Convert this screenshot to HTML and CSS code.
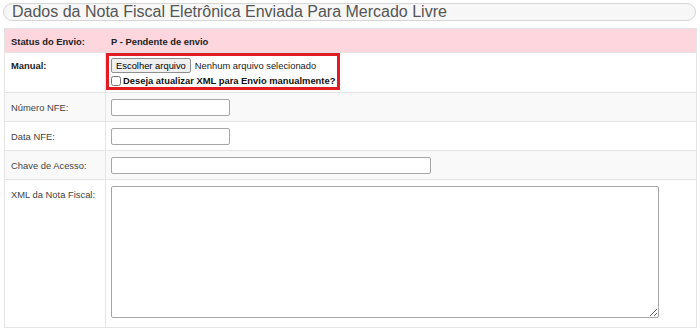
FILE: index.html
```html
<!DOCTYPE html>
<html lang="pt-BR">
<head>
<meta charset="utf-8">
<title>Dados da Nota Fiscal</title>
<link rel="stylesheet" href="styles.css">
</head>
<body>
<div class="page">
  <h1 class="box-title">Dados da Nota Fiscal Eletrônica Enviada Para Mercado Livre</h1>
  <table class="nf-table">
    <tr class="row-danger">
      <th class="lbl">Status do Envio:</th>
      <td class="val bold">P - Pendente de envio</td>
    </tr>
    <tr class="row-manual">
      <th class="lbl">Manual:</th>
      <td class="val val-manual">
        <div class="hl">
          <div class="file-line"><button class="file-btn" type="button">Escolher arquivo</button><span class="file-txt">Nenhum arquivo selecionado</span></div>
          <label class="chk-line"><input class="chk" type="checkbox"><span>Deseja atualizar XML para Envio manualmente?</span></label>
        </div>
      </td>
    </tr>
    <tr class="row-odd">
      <td class="lbl">Número NFE:</td>
      <td class="val"><input class="inp inp-sm" type="text"></td>
    </tr>
    <tr>
      <td class="lbl">Data NFE:</td>
      <td class="val"><input class="inp inp-sm" type="text"></td>
    </tr>
    <tr class="row-odd">
      <td class="lbl">Chave de Acesso:</td>
      <td class="val"><input class="inp inp-md" type="text"></td>
    </tr>
    <tr>
      <td class="lbl">XML da Nota Fiscal:</td>
      <td class="val"><textarea class="txt"></textarea></td>
    </tr>
  </table>
</div>
</body>
</html>
```

FILE: styles.css
```css
html, body {
  margin: 0;
  padding: 0;
  background: #ffffff;
}
body {
  font-family: "Liberation Sans", Arial, sans-serif;
  color: #333;
}
.page {
  padding: 3px 3px 0 3px;
}
.box-title {
  margin: 0 1px 0 0;
  height: 16px;
  line-height: 16px;
  font-size: 16px;
  font-weight: normal;
  color: #555;
  background: #f7f7f7;
  border: 1px solid #d6d6d6;
  border-radius: 9px;
  padding: 0 8px;
  white-space: nowrap;
  overflow: hidden;
}
.nf-table {
  margin: 7px 0 0 1px;
  width: 693px;
  border-collapse: collapse;
  font-size: 9.4px;
  line-height: 17px;
}
.nf-table th,
.nf-table td {
  border: 1px solid #e4e4e4;
  text-align: left;
  vertical-align: top;
}
.lbl {
  width: 88px;
  padding: 6px 6px 5px 6px;
  color: #444;
  font-weight: normal;
}
th.lbl {
  font-weight: bold;
  color: #222;
}
.val {
  padding: 6px 5px 5px 5px;
}
.bold {
  font-weight: bold;
  color: #222;
}
.nf-table .row-danger th,
.nf-table .row-danger td {
  background: #fdd6de;
  line-height: 15px;
  padding-top: 5px;
  padding-bottom: 3px;
}
.row-odd td {
  background: #f9f9f9;
}
.nf-table .row-manual .lbl {
  padding-top: 4px;
}
.nf-table .val-manual {
  padding: 0 0 2px 0;
}
.hl {
  display: inline-block;
  vertical-align: top;
  border: 3px solid #e31b23;
  padding: 1px 2px 0 2px;
  line-height: 13px;
}
.file-line {
  display: flex;
  align-items: center;
  height: 17px;
}
.file-btn {
  font-family: "Liberation Sans", Arial, sans-serif;
  font-size: 9.4px;
  height: 15px;
  line-height: 13px;
  padding: 0 4px;
  margin: 0;
  background: #efefef;
  border: 1px solid #8f8f8f;
  border-radius: 2px;
  color: #000;
}
.file-txt {
  margin-left: 4px;
  color: #222;
}
.chk-line {
  display: flex;
  align-items: center;
  height: 13px;
  font-weight: bold;
  color: #111;
}
.chk {
  width: 10px;
  height: 10px;
  margin: 0 2px 0 0;
}
.inp {
  display: block;
  box-sizing: border-box;
  height: 17px;
  margin: 0;
  border: 1px solid #a6a6a6;
  border-radius: 2px;
  background: #fff;
  font-size: 9.4px;
}
.inp-sm {
  width: 119px;
}
.inp-md {
  width: 320px;
}
.txt {
  display: block;
  box-sizing: border-box;
  width: 548px;
  height: 132px;
  margin: 0 0 4px 0;
  border: 1px solid #a6a6a6;
  border-radius: 2px;
  background: #fff;
}
```
